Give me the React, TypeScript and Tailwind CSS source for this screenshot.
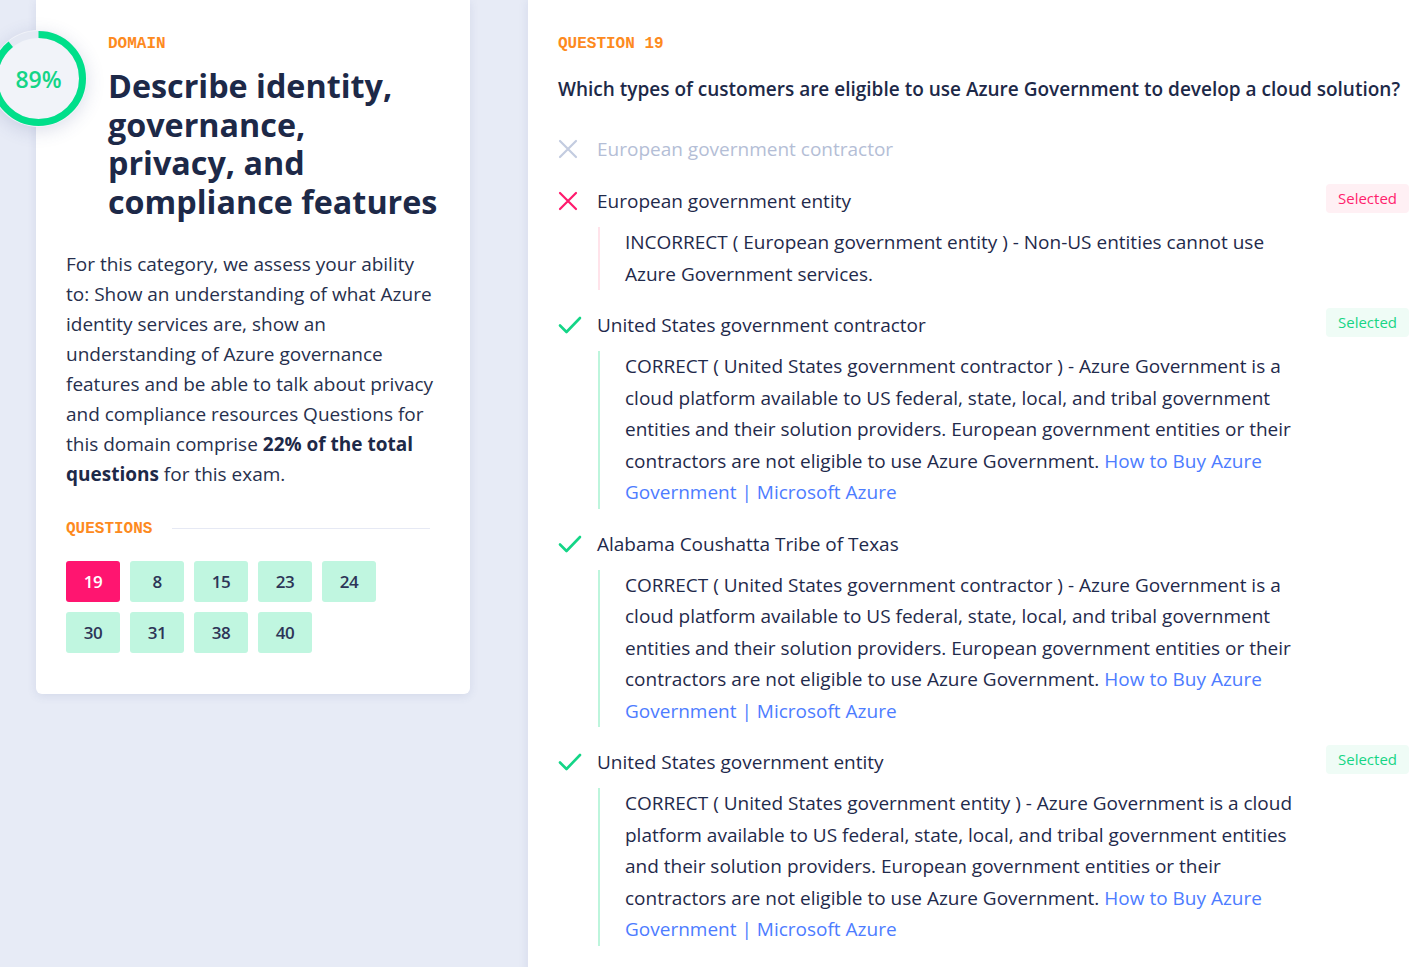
// Ergebnis-Ansicht: Domain-Karte links, Frage mit Antworten rechts.

import type { ReactNode } from "react"

type Answer = {
  text: string
  state: "neutral" | "wrong" | "right"
  selected?: boolean
  explanation?: ReactNode
}

const LINK = (
  <a href="#" className="text-[#4d7cff]">
    How to Buy Azure Government | Microsoft Azure
  </a>
)

const ANSWERS: Answer[] = [
  { text: "European government contractor", state: "neutral" },
  {
    text: "European government entity",
    state: "wrong",
    selected: true,
    explanation: <>INCORRECT ( European government entity ) - Non-US entities cannot use Azure Government services.</>,
  },
  {
    text: "United States government contractor",
    state: "right",
    selected: true,
    explanation: (
      <>
        CORRECT ( United States government contractor ) - Azure Government is a cloud platform available to US
        federal, state, local, and tribal government entities and their solution providers. European government
        entities or their contractors are not eligible to use Azure Government. {LINK}
      </>
    ),
  },
  {
    text: "Alabama Coushatta Tribe of Texas",
    state: "right",
    explanation: (
      <>
        CORRECT ( United States government contractor ) - Azure Government is a cloud platform available to US
        federal, state, local, and tribal government entities and their solution providers. European government
        entities or their contractors are not eligible to use Azure Government. {LINK}
      </>
    ),
  },
  {
    text: "United States government entity",
    state: "right",
    selected: true,
    explanation: (
      <>
        CORRECT ( United States government entity ) - Azure Government is a cloud platform available to US federal,
        state, local, and tribal government entities and their solution providers. European government entities or
        their contractors are not eligible to use Azure Government. {LINK}
      </>
    ),
  },
]

const QUESTIONS = [19, 8, 15, 23, 24, 30, 31, 38, 40]

function XIcon({ color }: { color: string }) {
  return (
    <svg width="20" height="20" viewBox="0 0 20 20" fill="none" stroke={color} strokeWidth="2.2" strokeLinecap="round">
      <path d="M2 2 L18 18 M18 2 L2 18" />
    </svg>
  )
}

function CheckIcon() {
  return (
    <svg width="24" height="20" viewBox="0 0 24 20" fill="none" stroke="#14d587" strokeWidth="2.6" strokeLinecap="round" strokeLinejoin="round">
      <path d="M2 10.5 L8.5 17 L22 3" />
    </svg>
  )
}

function ScoreRing({ value }: { value: number }) {
  const r = 44
  const c = 2 * Math.PI * r
  return (
    <div className="absolute left-[-46px] top-[30px] h-[97px] w-[97px] rounded-full bg-[#f1f3f9] shadow-[0_4px_18px_rgba(60,80,140,0.18)]">
      <svg width="97" height="97" viewBox="0 0 97 97" className="absolute inset-0">
        <circle cx="48.5" cy="48.5" r={r} fill="none" stroke="#e4e8f3" strokeWidth="7" />
        <circle
          cx="48.5"
          cy="48.5"
          r={r}
          fill="none"
          stroke="#00df8a"
          strokeWidth="7"
          strokeDasharray={`${(c * value) / 100} ${c}`}
          transform="rotate(-90 48.5 48.5)"
        />
      </svg>
      <span className="absolute inset-0 flex items-center justify-center pt-[2px] text-[23px] font-semibold text-[#14d587]">
        {value}%
      </span>
    </div>
  )
}

function AnswerRow({ a }: { a: Answer }) {
  const wrong = a.state === "wrong"
  return (
    <div className={`flex items-start ${a.explanation ? "" : "pb-[2px]"}`}>
      <div className="flex h-[30px] w-[39px] shrink-0 items-center">
        {a.state === "right" ? <CheckIcon /> : <XIcon color={wrong ? "#ff1a6c" : "#c3cce0"} />}
      </div>
      <div className="min-w-0 flex-1">
        <p className={`text-[19px] leading-[30px] ${a.state === "neutral" ? "text-[#b4bed6]" : "text-[#1f2a4b]"}`}>
          {a.text}
        </p>
        {a.explanation ? (
          <p
            className={`mt-[11px] ml-[1px] border-l-2 pl-[25px] text-[19px] leading-[31.5px] text-[#1f2a4b] ${
              wrong ? "border-[#ffe3ea]" : "border-[#bdf5dc]"
            }`}
          >
            {a.explanation}
          </p>
        ) : null}
      </div>
      {a.selected ? (
        <span
          className={`ml-[30px] mt-[-2px] shrink-0 rounded-[4px] px-[12px] py-[4px] text-[15px] leading-[21px] ${
            wrong ? "bg-[#fff0f4] text-[#ff1f6d]" : "bg-[#effcf6] text-[#16d585]"
          }`}
        >
          Selected
        </span>
      ) : (
        <span className="ml-[30px] w-[82px] shrink-0" />
      )}
    </div>
  )
}

export default function App() {
  return (
    <div className="flex min-h-screen bg-[#e7ebf6] font-['Open_Sans',sans-serif] antialiased">
      <aside className="w-[528px] shrink-0 pl-[36px] pr-[58px]">
        <div className="relative rounded-b-md bg-white pb-[41px] pl-[30px] pr-[38px] pt-[35px] shadow-[0_2px_10px_rgba(70,90,150,0.12)]">
          <ScoreRing value={89} />
          <div className="mr-[-14px] pl-[42px]">
            <p className="font-['Liberation_Mono',monospace] text-[16px] font-bold leading-[18px] text-[#fd8a1e]">DOMAIN</p>
            <h1 className="mt-[13px] whitespace-nowrap text-[32.3px] font-bold leading-[38.7px] text-[#1d2948]">
              Describe identity,
              <br />
              governance,
              <br />
              privacy, and
              <br />
              compliance features
            </h1>
          </div>
          <p className="mr-[-6px] mt-[28px] text-[19px] leading-[30px] text-[#27304d]">
            For this category, we assess your ability to: Show an understanding of what Azure identity services are,
            show an understanding of Azure governance features and be able to talk about privacy and compliance
            resources Questions for this domain comprise <b className="font-bold text-[#1d2948]">22% of the total questions</b>{" "}
            for this exam.
          </p>
          <div className="mt-[31px] flex items-center gap-[20px] pr-[2px]">
            <span className="font-['Liberation_Mono',monospace] text-[16px] font-bold leading-[18px] text-[#fd8a1e]">
              QUESTIONS
            </span>
            <div className="h-px flex-1 bg-[#e6e9f4]" />
          </div>
          <div className="mt-[23px] grid w-[310px] grid-cols-5 gap-x-[10px] gap-y-[10px]">
            {QUESTIONS.map((q, i) => (
              <button
                key={q}
                className={`flex h-[41px] w-[54px] items-center justify-center rounded-[3px] text-[17px] font-semibold tracking-[-0.5px] ${
                  i === 0 ? "bg-[#ff1570] text-white" : "bg-[#c0f6e0] text-[#2d3557]"
                }`}
              >
                {q}
              </button>
            ))}
          </div>
        </div>
      </aside>

      <main className="min-w-0 flex-1 bg-white pl-[30px] pr-[18px] pt-[35px] shadow-[-2px_0_8px_rgba(70,90,150,0.08)]">
        <p className="font-['Liberation_Mono',monospace] text-[16px] font-bold leading-[18px] text-[#fd8a1e]">QUESTION 19</p>
        <h2 className="mt-[21px] whitespace-nowrap text-[19px] font-semibold leading-[30px] text-[#1d2948]">
          Which types of customers are eligible to use Azure Government to develop a cloud solution?
        </h2>
        <div className="mt-[30px] flex flex-col gap-[20px] pb-10">
          {ANSWERS.map((a) => (
            <AnswerRow key={a.text} a={a} />
          ))}
        </div>
      </main>
    </div>
  )
}
